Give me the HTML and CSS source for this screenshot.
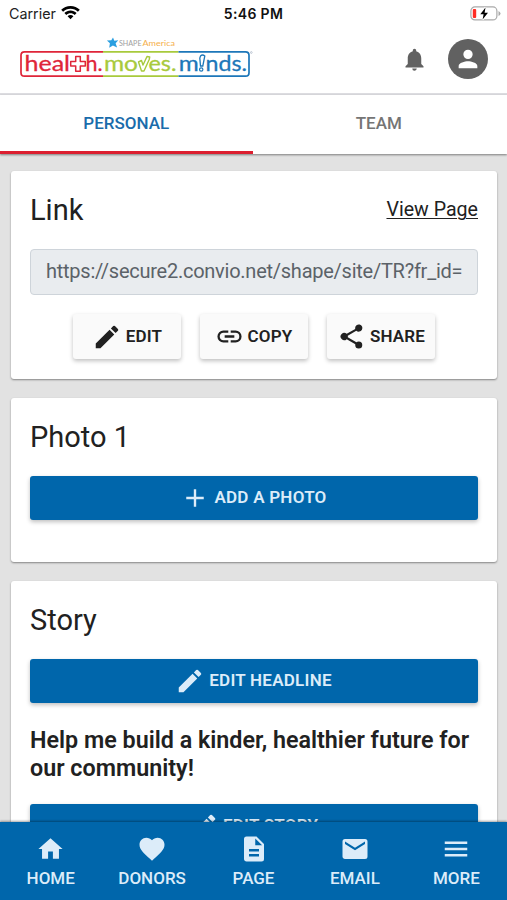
FILE: index.html
```html
<!DOCTYPE html>
<html lang="en">
<head>
<meta charset="utf-8">
<title>Personal page</title>
<link rel="stylesheet" href="styles.css">
</head>
<body>
<svg class="defs" width="0" height="0" aria-hidden="true">
  <symbol id="pencil" viewBox="0 0 24 24"><path d="M3 17.25V21h3.75L17.81 9.94l-3.75-3.75L3 17.25zM20.71 7.04a1 1 0 0 0 0-1.41l-2.34-2.34a1 1 0 0 0-1.41 0l-1.83 1.83 3.75 3.75 1.83-1.83z"/></symbol>
</svg>
<div class="app">
  <div class="status">
    <div class="carrier"><span>Carrier</span>
      <svg width="19" height="14" viewBox="0 0 19 14"><path d="M9.5 0C5.900 0 2.600 1.400.200 3.700L2.100 5.700C4 3.900 6.600 2.800 9.500 2.800S15 3.900 16.900 5.700L18.800 3.700C16.400 1.400 13.100 0 9.500 0zM9.500 4.600C7.100 4.600 5 5.500 3.400 7L5.300 8.900C6.400 7.900 7.900 7.300 9.500 7.300S12.600 7.900 13.700 8.900L15.600 7C14 5.500 11.900 4.600 9.500 4.600zM9.500 9.100C8.400 9.100 7.400 9.500 6.600 10.200L9.500 13.200 12.400 10.200C11.600 9.500 10.600 9.100 9.500 9.100z"/></svg>
    </div>
    <div class="time">5:46 PM</div>
    <svg class="battery" width="31" height="15" viewBox="0 0 31 15"><rect x=".9" y=".9" width="26" height="13" rx="4" fill="none" stroke="#a9a9a9" stroke-width="1.2"/><path d="M28.500 5v5q2-1 2-2.500t-2-2.500z" fill="#a9a9a9"/><rect x="2.800" y="3" width="3.400" height="9" rx="1" fill="#ff2d25"/><path d="M15.500 1.500 10.300 8.200h3.300L12.600 13.500 18 6.700h-3.400z" fill="#000" stroke="#fff" stroke-width="2" paint-order="stroke"/></svg>
  </div>
  <header class="header">
    <svg class="logo" width="236" height="42" viewBox="18 36 236 42">
      <path d="M113 37.500l1.300 3.300 4-.5-2.700 2.900 1.500 4.300-4.200-2-3.700 2.300.7-4.500-3-2.900 4.400-.2z" fill="#2b9fe0"/>
      <text x="119" y="46" class="logo-small" textLength="22.500" lengthAdjust="spacingAndGlyphs" fill="#a0a0a0">SHAPE</text>
      <text x="142.500" y="46" class="logo-small" textLength="32.500" lengthAdjust="spacingAndGlyphs" fill="#f5b04c">America</text>
      <g fill="none" stroke-width="1.700">
        <path d="M103 51.800H24.500Q21 51.800 21 55.300V72.700Q21 76.200 24.500 76.200H103" stroke="#df2539"/>
        <path d="M103 51.800H178.500M103 76.200H178.500" stroke="#a8ca3c"/>
        <path d="M178.500 51.800H245.500Q249 51.800 249 55.300V72.700Q249 76.200 245.500 76.200H178.500" stroke="#1d77b9"/>
      </g>
      <g class="logo-word" fill="#df2539" stroke="#df2539">
        <text x="24.500" y="71" textLength="45.500" lengthAdjust="spacingAndGlyphs">heal</text>
        <text x="85.500" y="71" textLength="17" lengthAdjust="spacingAndGlyphs">h.</text>
      </g>
      <path d="M75.700 56.500h4.600v5h5v4.600h-5v5.200h-4.600v-5.200h-5v-4.600h5z" fill="none" stroke="#df2539" stroke-width="1.500" stroke-linejoin="round"/>
      <g class="logo-word" fill="#a8ca3c" stroke="#a8ca3c">
        <text x="104" y="71" textLength="34" lengthAdjust="spacingAndGlyphs">mo</text>
        <text x="148.500" y="71" textLength="28" lengthAdjust="spacingAndGlyphs">es.</text>
      </g>
      <path d="M138.500 62l3-1.500 1.500 4.500 4-8.500 2.700.5-.5 2.500-5.200 11.500h-2.500z" fill="none" stroke="#a8ca3c" stroke-width="1.400" stroke-linejoin="round"/>
      <g class="logo-word" fill="#1d77b9" stroke="#1d77b9">
        <text x="178.800" y="71" textLength="20" lengthAdjust="spacingAndGlyphs">m</text>
        <text x="205.500" y="71" textLength="41.500" lengthAdjust="spacingAndGlyphs">nds.</text>
      </g>
      <path d="M200.500 56q2-2 4.300 0l-2 10h-2.300l-.7-8z" fill="none" stroke="#1d77b9" stroke-width="1.300"/><circle cx="201.200" cy="69.500" r="1.700" fill="none" stroke="#1d77b9" stroke-width="1.200"/>
      <circle cx="251.300" cy="52.500" r=".9" fill="none" stroke="#8a9bb0" stroke-width=".5"/>
    </svg>
    <div class="header-actions">
      <svg width="27" height="27" viewBox="0 0 24 24" fill="#616161"><path d="M12 22c1.100 0 2-.9 2-2h-4a2 2 0 0 0 2 2zm6-6v-5c0-3.070-1.640-5.640-4.500-6.320V4c0-.83-.67-1.500-1.500-1.500s-1.500.67-1.500 1.500v.68C7.630 5.360 6 7.920 6 11v5l-2 2v1h16v-1l-2-2z"/></svg>
      <div class="avatar"><svg width="28" height="28" viewBox="0 0 24 24" fill="#fff"><path d="M12 12a4 4 0 1 0 0-8 4 4 0 0 0 0 8zm0 2c-2.670 0-8 1.340-8 4v2h16v-2c0-2.660-5.330-4-8-4z"/></svg></div>
    </div>
  </header>
  <nav class="tabs"><div class="tab active">PERSONAL</div><div class="tab team">TEAM</div></nav>
  <main class="content">
    <section class="card link-card">
      <div class="card-head"><h2>Link</h2><a class="view">View Page</a></div>
      <div class="url">https://secure2.convio.net/shape/site/TR?fr_id=</div>
      <div class="actions">
        <div class="btn edit"><svg width="30" height="30"><use href="#pencil"/></svg><span>EDIT</span></div>
        <div class="btn copy"><svg width="29" height="29" viewBox="0 0 24 24"><path d="M3.900 12c0-1.710 1.390-3.100 3.100-3.100h4V7H7a5 5 0 0 0 0 10h4v-1.900H7c-1.710 0-3.100-1.390-3.100-3.100zM8 13h8v-2H8v2zm9-6h-4v1.900h4a3.100 3.100 0 0 1 0 6.200h-4V17h4a5 5 0 0 0 0-10z"/></svg><span>COPY</span></div>
        <div class="btn share"><svg width="29" height="29" viewBox="0 0 24 24"><path d="M18 16.080c-.76 0-1.440.3-1.960.77L8.910 12.700c.05-.23.090-.46.090-.7s-.04-.47-.09-.7l7.050-4.110A3 3 0 1 0 15 5c0 .24.040.47.090.7L8.040 9.810A3 3 0 1 0 8.040 14.190l7.120 4.160c-.05.210-.08.430-.08.650a2.920 2.920 0 1 0 2.920-2.920z"/></svg><span>SHARE</span></div>
      </div>
    </section>
    <section class="card photo-card">
      <h2>Photo 1</h2>
      <div class="primary add"><svg width="30" height="30" viewBox="0 0 24 24"><path d="M12 5v14M5 12h14" fill="none" stroke="#dcecf9" stroke-width="1.900"/></svg><span>ADD A PHOTO</span></div>
    </section>
    <section class="card story-card">
      <h2>Story</h2>
      <div class="primary headline"><svg width="30" height="30"><use href="#pencil"/></svg><span>EDIT HEADLINE</span></div>
      <p>Help me build a kinder, healthier future for<br>our community!</p>
      <div class="primary story"><svg width="30" height="30"><use href="#pencil"/></svg><span>EDIT STORY</span></div>
    </section>
  </main>
  <nav class="bottom">
    <div class="item"><svg width="29" height="29" viewBox="0 0 24 24"><path d="M10 20v-6h4v6h5v-8h3L12 3 2 12h3v8z"/></svg><span>HOME</span></div>
    <div class="item"><svg width="30" height="30" viewBox="0 0 24 24"><path d="M12 21.350l-1.450-1.320C5.400 15.360 2 12.280 2 8.500 2 5.420 4.420 3 7.500 3c1.740 0 3.410.81 4.500 2.090C13.090 3.810 14.760 3 16.500 3 19.580 3 22 5.420 22 8.500c0 3.780-3.400 6.860-8.550 11.540z"/></svg><span>DONORS</span></div>
    <div class="item"><svg width="30" height="30" viewBox="0 0 24 24"><path d="M14 2H6a2 2 0 0 0-2 2v16c0 1.100.9 2 2 2h12a2 2 0 0 0 2-2V8zm2 16H8v-2h8v2zm0-4H8v-2h8v2zm-3-5V3.500L18.500 9z"/></svg><span>PAGE</span></div>
    <div class="item"><svg width="30" height="30" viewBox="0 0 24 24"><path d="M20 4H4a2 2 0 0 0-2 2v12c0 1.100.9 2 2 2h16a2 2 0 0 0 2-2V6a2 2 0 0 0-2-2zm0 4l-8 5-8-5V6l8 5 8-5z"/></svg><span>EMAIL</span></div>
    <div class="item"><svg width="30" height="30" viewBox="0 0 24 24"><path d="M3 18h18v-2H3zm0-5h18v-2H3zm0-7v2h18V6z"/></svg><span>MORE</span></div>
  </nav>
</div>
</body>
</html>
```
FILE: styles.css
```css
* { box-sizing: border-box; }
body { margin: 0; font-family: Roboto, sans-serif; color: #212121; background: #e2e2e2; }
svg { display: block; flex: none; }
.defs { position: absolute; }
.app { height: 900px; overflow: hidden; display: flex; flex-direction: column; }
.status { height: 28px; flex: none; background: #fff; display: grid; grid-template-columns: 1fr auto 1fr; align-items: center; padding: 0 6px 2px 9px; font-family: Inter, sans-serif; }
.carrier { display: flex; align-items: center; gap: 5px; font-size: 14.3px; color: #222; }
.time { font-size: 14px; font-weight: 600; color: #111; letter-spacing: .35px; margin-right: 3px; }
.battery { justify-self: end; }
.header { height: 67px; flex: none; background: #fff; border-bottom: 2px solid #dcdce0; display: flex; align-items: flex-start; justify-content: space-between; padding: 8px 19px 0 18px; }
.logo-small { font: 8px Lato, sans-serif; }
.logo-word { font: 22px Lato, sans-serif; stroke-width: .3px; }
.header-actions { display: flex; align-items: center; gap: 20px; padding-top: 3px; }
.avatar { width: 40px; height: 40px; border-radius: 50%; background: #616161; display: flex; align-items: center; justify-content: center; }
.tabs { height: 59px; flex: none; background: #fff; display: flex; box-shadow: 0 1px 2px rgba(0,0,0,.45); position: relative; }
.tab { flex: 1; display: flex; align-items: center; justify-content: center; font-size: 17px; font-weight: 500; color: #757575; border-bottom: 3px solid transparent; }
.tab.active { color: #1a6cab; border-bottom-color: #dc1f30; }
.tab.team { padding-right: 2px; }
.content { flex: 1; min-height: 0; overflow: hidden; padding: 16.500px 10px 0 11px; display: flex; flex-direction: column; gap: 19px; }
.card { flex: none; background: #fff; border-radius: 3px; box-shadow: 0 1px 2px rgba(0,0,0,.42); padding: 20px 19px 0; }
.link-card { height: 208px; padding-top: 20.500px; margin-bottom: .5px; }
.photo-card { height: 164px; }
.story-card { height: 320px; }
.card-head { display: flex; justify-content: space-between; align-items: center; }
h2 { margin: 0; font-size: 29px; line-height: 38px; font-weight: 400; }
.view { font-size: 19.600px; line-height: 38px; text-decoration: underline; text-underline-offset: 2px; text-decoration-thickness: 1px; }
.url { margin-top: 20px; height: 46px; border: 1px solid #ced4da; border-radius: 4px; background: #e9ecef; color: #5b6268; font-size: 20px; letter-spacing: -.25px; line-height: 43px; padding-left: 15px; white-space: nowrap; overflow: hidden; }
.actions { display: flex; justify-content: center; gap: 19px; margin-top: 19px; }
.btn, .primary { display: flex; align-items: center; justify-content: center; gap: 4px; border-radius: 3px; box-shadow: 0 2px 4px rgba(0,0,0,.25); font-size: 17px; font-weight: 600; }
.btn { width: 108px; height: 45px; background: #fafafa; fill: #212121; }
.btn span { padding-bottom: 2px; letter-spacing: .15px; }
.btn.copy { padding-right: 1px; }
.primary { height: 44px; background: #0066ab; color: #dcecf9; fill: #dcecf9; letter-spacing: .25px; margin-top: 20px; padding-right: 1px; }
.primary span { padding-bottom: 2px; }
p { margin: 22.500px 0 0; font-size: 23.300px; line-height: 28px; font-weight: 600; white-space: nowrap; }
.primary.story { margin-top: 22.500px; }
.bottom { height: 78px; flex: none; background: #0066ab; display: flex; box-shadow: 0 -1px 2px rgba(0,0,0,.35); position: relative; color: #dcecf9; fill: #dcecf9; }
.item { flex: 1; display: flex; flex-direction: column; align-items: center; padding-top: 12px; gap: 4px; font-size: 17px; line-height: 20px; font-weight: 500; }
.item svg { height: 30px; }
```
